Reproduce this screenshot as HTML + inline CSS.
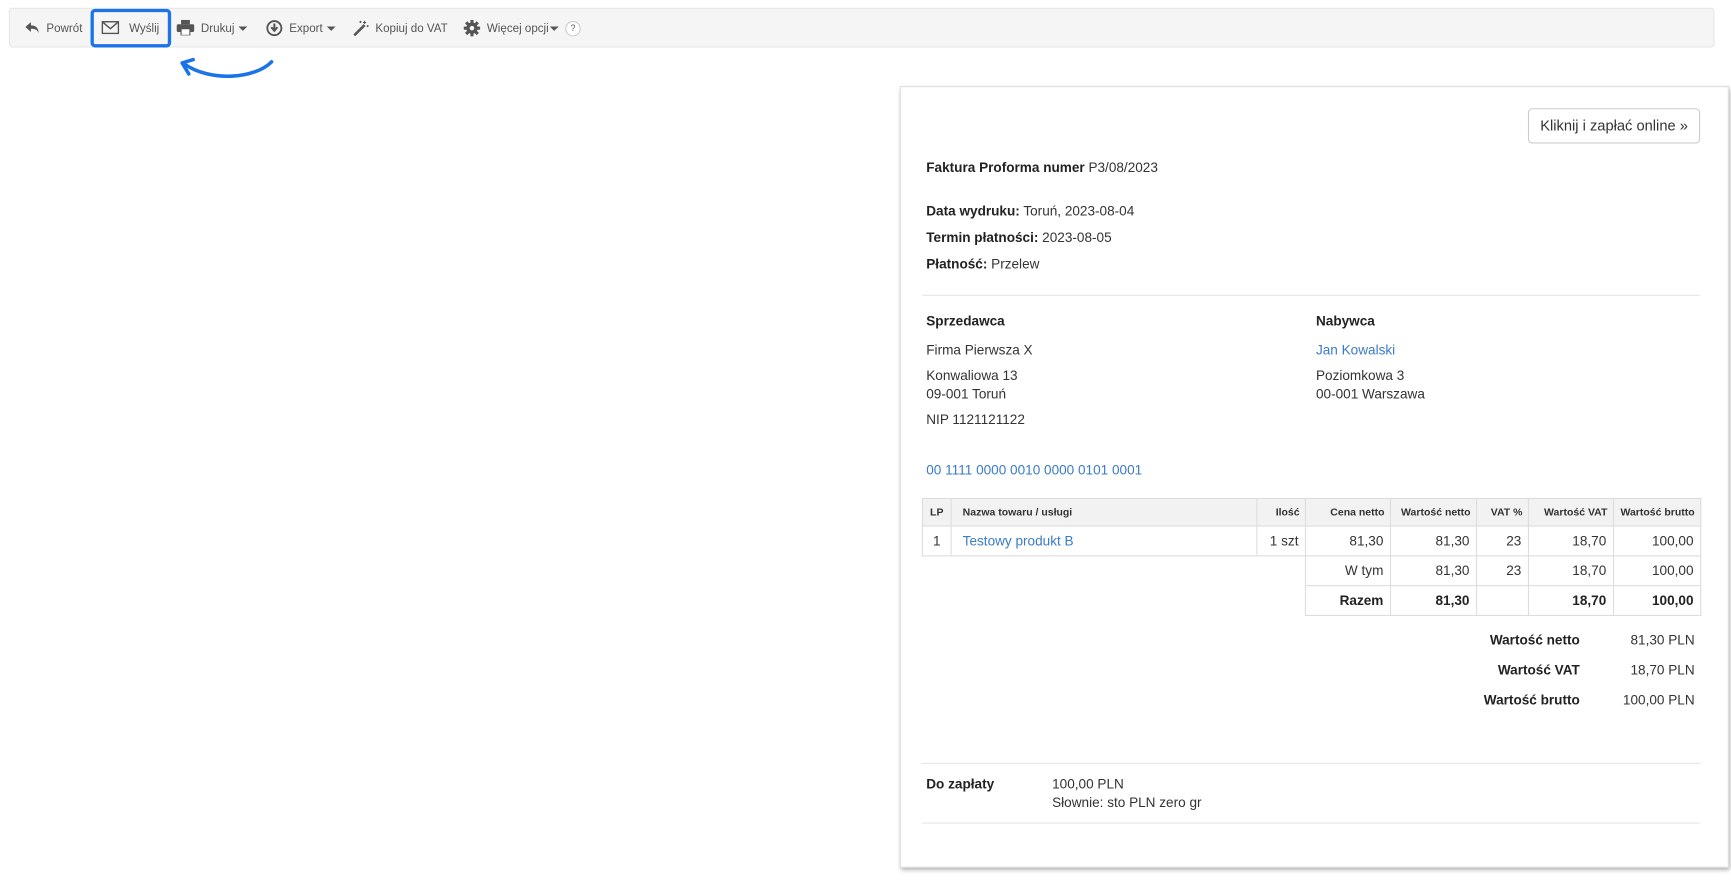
<!DOCTYPE html>
<html><head><meta charset="utf-8">
<style>
*{box-sizing:border-box;margin:0;padding:0}
body{width:1731px;height:882px;background:#fff;font-family:"Liberation Sans",Arial,sans-serif;color:#333;position:relative;overflow:hidden}
#w{position:absolute;left:0;top:0;width:1568px;height:800px;transform:scale(1.104);transform-origin:0 0}
.tb{position:absolute;left:8px;top:7px;width:1545px;height:36px;background:#f5f5f5;border:1px solid #e6e6e6;border-radius:3px}
.ti{position:absolute;top:0;height:36px;line-height:36px;font-size:10.5px;color:#555;white-space:nowrap}
.ti svg{vertical-align:middle;margin-right:6px;position:relative;top:-1px}
.car{display:inline-block;width:0;height:0;border-left:4px solid transparent;border-right:4px solid transparent;border-top:4px solid #555;vertical-align:middle;margin-left:4px}
.hl{position:absolute;left:82px;top:8px;width:73px;height:35px;border:3px solid #1a73e8;border-radius:4px}
.paper{position:absolute;left:815px;top:78px;width:751px;height:708px;background:#fff;border:1px solid #ddd;box-shadow:1px 2px 4px rgba(0,0,0,.35)}
.a{position:absolute;font-size:12.3px;white-space:nowrap}
b{font-weight:bold;color:#222}
.lk{color:#3a7bc8}
.btn{position:absolute;left:1384px;top:98px;width:156px;height:32px;border:1px solid #ccc;border-radius:4px;font-size:13.3px;line-height:30px;text-align:center;color:#333}
.hr{position:absolute;left:835px;width:705px;height:1px;background:#e5e5e5}
table{position:absolute;border-collapse:collapse;font-size:12.3px}
td{border:1px solid #ddd;padding:0 6px;height:27px;text-align:right;white-space:nowrap}
th{border:1px solid #ddd;background:#f2f2f2;font-size:9.5px;font-weight:bold;color:#333;height:25px;padding:0 5px;text-align:right;white-space:nowrap}
</style></head><body><div id="w">
<div class="tb">
 <div class="ti" style="left:13px"><svg width="14" height="12" viewBox="0 0 14 12"><path d="M6 1L1 5.5 6 10V7c4 0 6 1 7 4 0-4-2-7-7-7z" fill="#555"/></svg>Powrót</div>
 <div class="ti" style="left:83px"><svg width="16" height="12" viewBox="0 0 16 12"><rect x=".7" y=".7" width="14.6" height="10.6" fill="none" stroke="#555" stroke-width="1.3"/><path d="M1 1l7 6 7-6" fill="none" stroke="#555" stroke-width="1.3"/></svg> Wyślij</div>
 <div class="ti" style="left:151px"><svg width="16" height="14" viewBox="0 0 16 14"><rect x="4" y="0" width="8" height="4" fill="#555"/><rect x="0" y="4" width="16" height="7" rx="1.5" fill="#555"/><rect x="4" y="8" width="8" height="6" fill="#fff" stroke="#555"/></svg>Drukuj<span class="car"></span></div>
 <div class="ti" style="left:232px"><svg width="15" height="15" viewBox="0 0 16 16"><circle cx="8" cy="8" r="6.8" fill="none" stroke="#555" stroke-width="1.8"/><path d="M8 3.5v6M5 7l3 3.5L11 7" fill="none" stroke="#555" stroke-width="2"/></svg>Export<span class="car"></span></div>
 <div class="ti" style="left:310px"><svg width="15" height="15" viewBox="0 0 16 16"><path d="M2 15L12 5" stroke="#555" stroke-width="2.5"/><path d="M12 1v3M10.5 2.5h3M15 5v2M14 6h2M8 1v2M7 2h2" stroke="#555" stroke-width="1"/></svg>Kopiuj do VAT</div>
 <div class="ti" style="left:411px"><svg width="15" height="15" viewBox="0 0 16 16"><g fill="#555"><circle cx="8" cy="8" r="5.5"/><rect x="6.5" y="0" width="3" height="16"/><rect x="0" y="6.5" width="16" height="3"/><rect x="6.5" y="0" width="3" height="16" transform="rotate(45 8 8)"/><rect x="6.5" y="0" width="3" height="16" transform="rotate(-45 8 8)"/></g><circle cx="8" cy="8" r="2.2" fill="#f5f5f5"/></svg>Więcej opcji<span class="car" style="margin-left:1px"></span></div>
 <div class="ti" style="left:503px;top:11px;width:14px;height:14px;line-height:12px;border:1px solid #ccc;border-radius:50%;background:#fff;font-size:8px;text-align:center">?</div>
</div>
<div class="hl"></div>
<svg style="position:absolute;left:160px;top:48px" width="92" height="28" viewBox="0 0 92 28"><path d="M86 8C70 24 30 26 7 10" fill="none" stroke="#1a73e8" stroke-width="3.2" stroke-linecap="round"/><path d="M15 6L5 9l6 10" fill="none" stroke="#1a73e8" stroke-width="3.2" stroke-linecap="round" stroke-linejoin="round"/></svg>

<div class="paper"></div>
<div class="btn">Kliknij i zapłać online »</div>
<div class="a" style="left:839px;top:145px"><b>Faktura Proforma numer</b> P3/08/2023</div>
<div class="a" style="left:839px;top:184px"><b>Data wydruku:</b> Toruń, 2023-08-04</div>
<div class="a" style="left:839px;top:208px"><b>Termin płatności:</b> 2023-08-05</div>
<div class="a" style="left:839px;top:232px"><b>Płatność:</b> Przelew</div>
<div class="hr" style="top:267px"></div>
<div class="a" style="left:839px;top:284px"><b>Sprzedawca</b></div>
<div class="a" style="left:839px;top:310px">Firma Pierwsza X</div>
<div class="a" style="left:839px;top:333px">Konwaliowa 13</div>
<div class="a" style="left:839px;top:350px">09-001 Toruń</div>
<div class="a" style="left:839px;top:373px">NIP 1121121122</div>
<div class="a" style="left:1192px;top:284px"><b>Nabywca</b></div>
<div class="a lk" style="left:1192px;top:310px">Jan Kowalski</div>
<div class="a" style="left:1192px;top:333px">Poziomkowa 3</div>
<div class="a" style="left:1192px;top:350px">00-001 Warszawa</div>
<div class="a lk" style="left:839px;top:419px">00 1111 0000 0010 0000 0101 0001</div>

<table style="left:835px;top:451px;width:706px">
<colgroup><col style="width:26px"><col style="width:278px"><col style="width:44px"><col style="width:77px"><col style="width:78px"><col style="width:47px"><col style="width:77px"><col style="width:79px"></colgroup>
<tr><th style="text-align:center">LP</th><th style="text-align:left;padding-left:10px">Nazwa towaru / usługi</th><th>Ilość</th><th>Cena netto</th><th>Wartość netto</th><th>VAT %</th><th>Wartość VAT</th><th>Wartość brutto</th></tr>
<tr><td style="text-align:center">1</td><td class="lk" style="text-align:left;padding-left:10px">Testowy produkt B</td><td>1 szt</td><td>81,30</td><td>81,30</td><td>23</td><td>18,70</td><td>100,00</td></tr>
<tr><td colspan="3" style="border:none;border-right:1px solid #ddd"></td><td>W tym</td><td>81,30</td><td>23</td><td>18,70</td><td>100,00</td></tr>
<tr><td colspan="3" style="border:none;border-right:1px solid #ddd"></td><td><b>Razem</b></td><td><b>81,30</b></td><td></td><td><b>18,70</b></td><td><b>100,00</b></td></tr>
</table>

<div class="a" style="right:137px;top:573px"><b>Wartość netto</b></div>
<div class="a" style="right:33px;top:573px">81,30 PLN</div>
<div class="a" style="right:137px;top:600px"><b>Wartość VAT</b></div>
<div class="a" style="right:33px;top:600px">18,70 PLN</div>
<div class="a" style="right:137px;top:627px"><b>Wartość brutto</b></div>
<div class="a" style="right:33px;top:627px">100,00 PLN</div>
<div class="hr" style="top:691px"></div>
<div class="a" style="left:839px;top:703px"><b>Do zapłaty</b></div>
<div class="a" style="left:953px;top:703px">100,00 PLN</div>
<div class="a" style="left:953px;top:720px">Słownie: sto PLN zero gr</div>
<div class="hr" style="top:745px"></div>
</div></body></html>
